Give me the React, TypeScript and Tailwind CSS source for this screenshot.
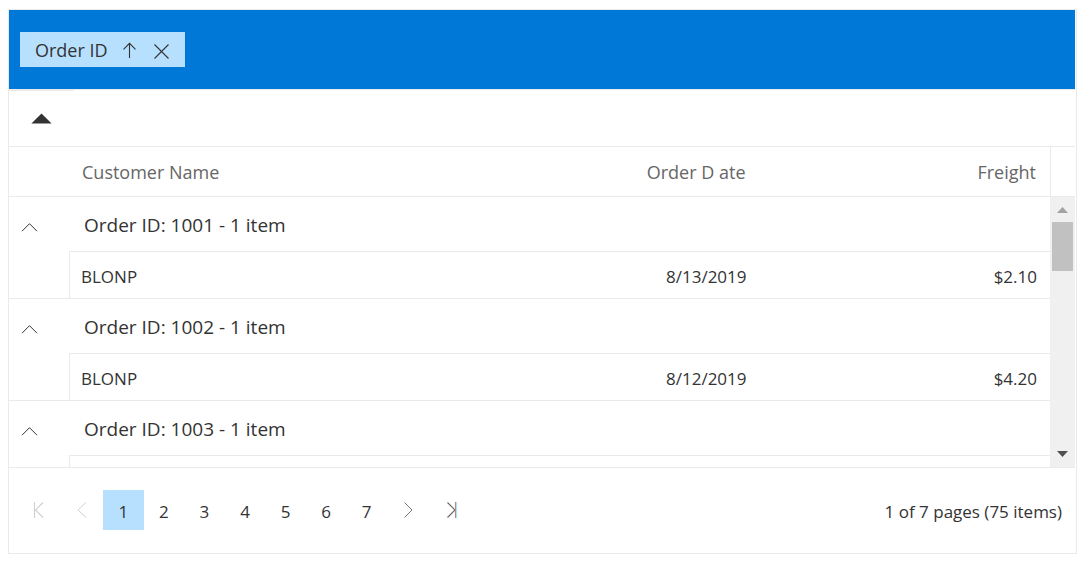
import { Fragment, useState } from 'react';

interface Order {
  id: number;
  customer?: string;
  date?: string;
  freight?: string;
}

const orders: Order[] = [
  { id: 1001, customer: 'BLONP', date: '8/13/2019', freight: '$2.10' },
  { id: 1002, customer: 'BLONP', date: '8/12/2019', freight: '$4.20' },
  { id: 1003 },
];

const pages = [1, 2, 3, 4, 5, 6, 7];

function Columns() {
  return (
    <colgroup>
      <col className="w-[60px]" />
      <col />
      <col className="w-[28%]" />
      <col className="w-[28%]" />
    </colgroup>
  );
}

function GroupArea() {
  return (
    <div className="flex h-20 items-start border-b border-[#eaeaea] bg-[#0078d7] pt-[22px] pl-[11px]">
      <div className="flex h-[35px] w-[165px] items-center bg-[#b7e0ff] pl-[15px] text-[#333333]">
        <span className="w-[88px] text-lg">Order ID</span>
        <button type="button" aria-label="Sort ascending" className="w-[31px] pt-px">
          <svg width="14" height="17" viewBox="0 0 14 17" fill="none" stroke="currentColor" strokeWidth="1.1">
            <path d="M6.5 16V1.5M0.5 7.3L6.5 1.3L12.5 7.3" />
          </svg>
        </button>
        <button type="button" aria-label="Ungroup Order ID" className="pt-[3px]">
          <svg width="15" height="15" viewBox="0 0 15 15" fill="none" stroke="currentColor" strokeWidth="1.1">
            <path d="M0.5 0.5L14.5 14.5M14.5 0.5L0.5 14.5" />
          </svg>
        </button>
      </div>
    </div>
  );
}

function Toolbar() {
  return (
    <div className="flex h-[57px] flex-col border-b border-[#eaeaea]">
      <div className="h-px w-[65px] bg-[#eaeaea]" />
      <button type="button" aria-label="Collapse all groups" className="ml-[22px] mt-[22px] self-start text-[#333333]">
        <svg width="21" height="11" viewBox="0 0 21 11" fill="currentColor" className="block">
          <path d="M0.4 10.5L10.5 0.4L20.6 10.5Z" />
        </svg>
      </button>
    </div>
  );
}

function Scrollbar() {
  return (
    <div className="flex w-[25px] shrink-0 flex-col items-start bg-[#f0f0f0] pl-[2px]" aria-hidden="true">
      <div className="flex h-[25px] w-[21px] items-center justify-center pt-px">
        <svg width="11" height="6" viewBox="0 0 11 6" fill="#a3a3a3">
          <path d="M0 6L5.5 0L11 6Z" />
        </svg>
      </div>
      <div className="h-[49px] w-[21px] bg-[#c1c1c1]" />
      <div className="mt-auto flex h-[27px] w-[21px] items-center justify-center">
        <svg width="11" height="6" viewBox="0 0 11 6" fill="#505050">
          <path d="M0 0L5.5 6L11 0Z" />
        </svg>
      </div>
    </div>
  );
}

function GridContent() {
  const [closed, setClosed] = useState<number[]>([]);
  const toggle = (id: number) =>
    setClosed((ids) => (ids.includes(id) ? ids.filter((n) => n !== id) : [...ids, id]));

  return (
    <div className="flex h-[271px] overflow-hidden border-b border-[#eaeaea]">
      <div className="min-w-0 flex-1 overflow-hidden">
        <table className="w-full table-fixed border-separate border-spacing-0 text-[#333333]">
          <Columns />
          <tbody>
            {orders.map((order) => (
              <Fragment key={order.id}>
                <tr className="h-[55px]">
                  <td className="p-0 pt-[5px] pl-[12px] align-middle">
                    <button type="button" aria-label={`Toggle order ${order.id}`} onClick={() => toggle(order.id)} className="block">
                      <svg width="17" height="9" viewBox="0 0 17 9" fill="none" stroke="currentColor" className="block">
                        <path d="M1 8.2L8.5 0.7L16 8.2" />
                      </svg>
                    </button>
                  </td>
                  <td colSpan={3} className="border-b border-[#eaeaea] p-0 pt-[3px] pl-[15px] text-[19px]">
                    Order ID: {order.id} - 1 item
                  </td>
                </tr>
                {!closed.includes(order.id) && (
                  <tr className="h-[47px] text-[17px]">
                    <td className="border-b border-[#eaeaea] p-0" />
                    <td className="border-b border-l border-[#eaeaea] p-0 pt-[3px] pl-[11px]">{order.customer}</td>
                    <td className="border-b border-[#eaeaea] p-0 pt-[3px] pr-[12px] text-right">{order.date}</td>
                    <td className="border-b border-[#eaeaea] p-0 pt-[3px] pr-[13px] text-right">{order.freight}</td>
                  </tr>
                )}
              </Fragment>
            ))}
          </tbody>
        </table>
      </div>
      <Scrollbar />
    </div>
  );
}

function Pager() {
  const [current, setCurrent] = useState(1);
  return (
    <nav aria-label="Pages" className="flex h-[85px] items-center pr-[13px] pb-px pl-[23px] text-[17px] text-[#333333]">
      <button type="button" aria-label="First page" disabled={current === 1} onClick={() => setCurrent(1)} className="w-[45px] text-[#d0d0d0]">
        <svg width="12" height="16" viewBox="0 0 12 16" fill="none" stroke="currentColor" strokeWidth="1.1">
          <path d="M2.5 0V16M11 0.5L3.5 8L11 15.5" />
        </svg>
      </button>
      <button type="button" aria-label="Previous page" disabled={current === 1} onClick={() => setCurrent(current - 1)} className="w-[26px] text-[#d0d0d0]">
        <svg width="10" height="16" viewBox="0 0 10 16" fill="none" stroke="currentColor">
          <path d="M9 0.5L1 8L9 15.5" />
        </svg>
      </button>
      <div className="grid w-[284px] grid-cols-7">
        {pages.map((page) => (
          <button
            key={page}
            type="button"
            onClick={() => setCurrent(page)}
            className={page === current ? 'h-10 bg-[#b7e0ff] pt-[3px]' : 'h-10 pt-[3px]'}
          >
            {page}
          </button>
        ))}
      </div>
      <button type="button" aria-label="Next page" onClick={() => setCurrent(Math.min(7, current + 1))} className="ml-[17px] w-[42px] text-[#777777]">
        <svg width="10" height="16" viewBox="0 0 10 16" fill="none" stroke="currentColor">
          <path d="M0.5 0.5L8 8L0.5 15.5" />
        </svg>
      </button>
      <button type="button" aria-label="Last page" onClick={() => setCurrent(7)} className="text-[#666666]">
        <svg width="12" height="16" viewBox="0 0 12 16" fill="none" stroke="currentColor" strokeWidth="1.1">
          <path d="M1.5 0.5L9 8L1.5 15.5" />
          <path d="M9.5 0V16" stroke="#b08d7d" />
          <path d="M10.5 0V16" stroke="#a5e3f5" />
        </svg>
      </button>
      <p className="ml-auto pt-[3px]">1 of 7 pages (75 items)</p>
    </nav>
  );
}

export default function App() {
  return (
    <main className="min-h-screen bg-white pt-[9px] pr-[11px] pl-2 font-['Open_Sans','Noto_Sans',sans-serif]">
      <section className="border border-[#eaeaea] pr-px">
        <GroupArea />
        <Toolbar />
        <div className="flex border-b border-[#eaeaea]">
          <table className="min-w-0 flex-1 table-fixed border-separate border-spacing-0 text-lg text-[#666666]">
            <Columns />
            <thead>
              <tr className="h-[49px]">
                <th className="p-0" aria-label="Group" />
                <th className="p-0 pl-[13px] text-left font-normal">Customer Name</th>
                <th className="p-0 pr-[13px] text-right font-normal">Order D ate</th>
                <th className="p-0 pr-[14px] text-right font-normal">Freight</th>
              </tr>
            </thead>
          </table>
          <div className="w-[25px] shrink-0 border-l border-[#eaeaea]" />
        </div>
        <GridContent />
        <Pager />
      </section>
    </main>
  );
}
